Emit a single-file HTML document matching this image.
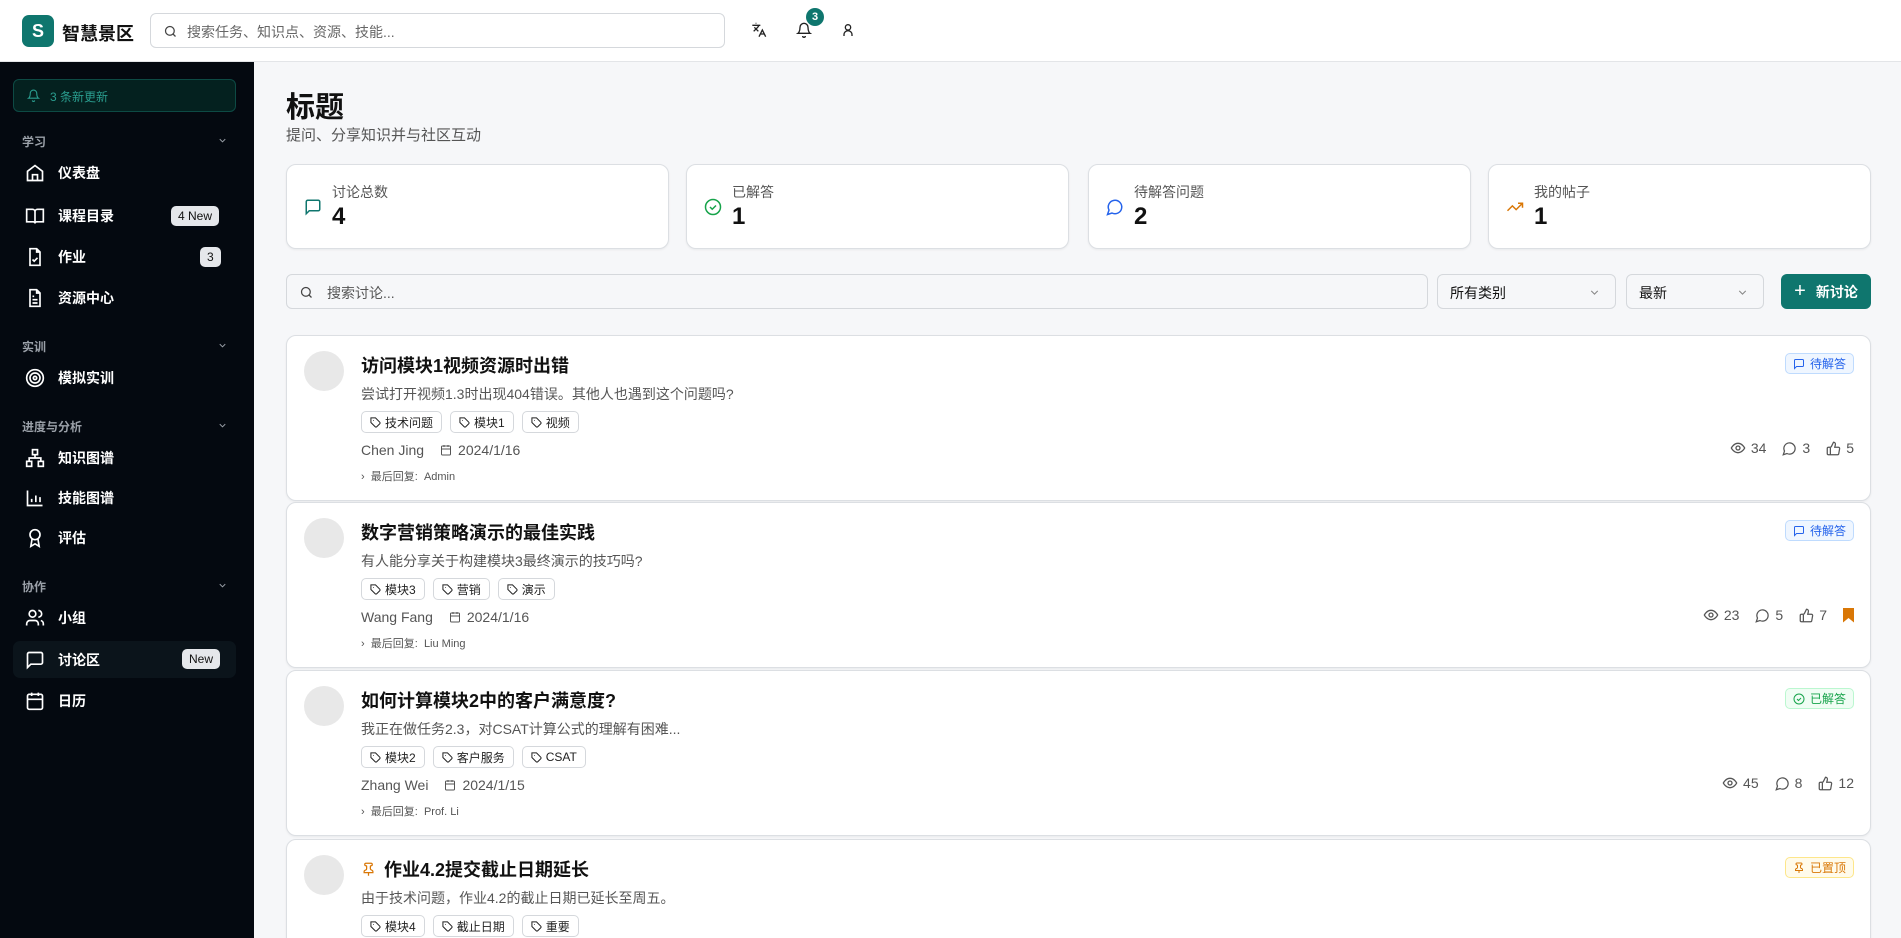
<!DOCTYPE html>
<html><head><meta charset="utf-8"><style>
*{box-sizing:border-box;margin:0;padding:0}
html,body{width:1901px;height:938px;overflow:hidden}
body{background:#f6f7f9;font-family:"Liberation Sans","Noto Sans CJK SC",sans-serif;color:#111;position:relative}
.a{position:absolute}
svg{display:block}
.hdr{left:0;top:0;width:1901px;height:62px;background:#fff;border-bottom:1px solid #e3e5e8}
.side{left:0;top:62px;width:254px;height:876px;background:#040910}
.sec{left:22px;font-size:12px;color:#9aa0a8;font-weight:bold}
.chev{left:217px}
.it{left:25px;display:flex;align-items:center;color:#fff;font-size:14px;font-weight:bold;height:24px}
.it svg{margin-right:13px}
.nb{position:absolute;background:#e5e7eb;color:#111;font-size:12px;border-radius:5px;padding:3px 7px;font-weight:normal}
.card{background:#fff;border:1px solid #dcdfe3;border-radius:10px;box-shadow:0 1px 2px rgba(0,0,0,.06)}
.stat .lbl{position:absolute;left:45px;top:17px;font-size:14px;color:#555}
.stat .num{position:absolute;left:45px;top:38px;font-size:24px;font-weight:bold}
.stat svg{position:absolute;left:17px;top:33px}
.inp{background:#f6f7f9;border:1px solid #d5d8dc;border-radius:6px}
.post{left:286px;width:1585px;height:166px}
.av{position:absolute;left:17px;top:15px;width:40px;height:40px;border-radius:50%;background:#e8e8e8}
.tt{position:absolute;left:74px;top:16px;font-size:18px;font-weight:bold}
.ds{position:absolute;left:74px;top:48px;font-size:14px;color:#555}
.tags{position:absolute;left:74px;top:75px;display:flex;gap:8px}
.tag{border:1px solid #d5d8dc;border-radius:5px;height:22px;padding:0 8px;font-size:12px;display:flex;align-items:center;gap:4px;color:#222}
.au{position:absolute;left:74px;top:106px;font-size:14px;color:#555;display:flex;align-items:center}
.lr{position:absolute;left:74px;top:132px;font-size:11px;color:#555;display:flex;align-items:center;gap:6px}
.bd{position:absolute;right:16px;top:17px;height:21px;padding:0 7px;border-radius:5px;font-size:12px;display:flex;align-items:center;gap:5px}
.st{position:absolute;right:16px;top:104px;display:flex;gap:16px;font-size:14px;color:#555;align-items:center}
.st span{display:flex;align-items:center;gap:5px}
</style></head><body>
<svg width="0" height="0" style="position:absolute"><defs>
<symbol id="tg" viewBox="0 0 24 24"><path d="M12 2H2v10l9.3 9.3a2.4 2.4 0 003.4 0l6.6-6.6a2.4 2.4 0 000-3.4z" fill="none" stroke="#222" stroke-width="2.2"/><circle cx="7.5" cy="7.5" r="1" fill="#222"/></symbol>
<symbol id="eye" viewBox="0 0 24 24"><path d="M2 12s3.5-7 10-7 10 7 10 7-3.5 7-10 7S2 12 2 12z" fill="none" stroke="#555" stroke-width="2"/><circle cx="12" cy="12" r="3" fill="none" stroke="#555" stroke-width="2"/></symbol>
<symbol id="msg" viewBox="0 0 24 24"><path d="M7.9 20A9 9 0 104 16.1L2 22z" fill="none" stroke="#555" stroke-width="2"/></symbol>
<symbol id="thumb" viewBox="0 0 24 24"><path d="M7 10v12M15 5.9L14 10h5.8a2 2 0 012 2.3l-1.4 8a2 2 0 01-2 1.7H4a2 2 0 01-2-2v-8a2 2 0 012-2h2.8a2 2 0 001.8-1.1L12 2a3 3 0 013 3.9z" fill="none" stroke="#555" stroke-width="2"/></symbol>
<symbol id="cal" viewBox="0 0 24 24"><rect x="3" y="4" width="18" height="18" rx="2" fill="none" stroke="#555" stroke-width="2"/><path d="M16 2v4M8 2v4M3 10h18" stroke="#555" stroke-width="2"/></symbol>
<symbol id="chv" viewBox="0 0 24 24"><path d="M6 9l6 6 6-6" fill="none" stroke="#9aa0a8" stroke-width="2"/></symbol>
</defs></svg>
<div class="a hdr">
 <div class="a" style="left:22px;top:15px;width:32px;height:32px;background:#0f766e;border-radius:7px;color:#fff;font-weight:bold;font-size:18px;text-align:center;line-height:32px">S</div>
 <div class="a" style="left:62px;top:20px;font-size:18px;font-weight:bold">智慧景区</div>
 <div class="a" style="left:150px;top:13px;width:575px;height:35px;border:1px solid #d5d8dc;border-radius:6px">
  <svg class="a" style="left:12px;top:10px" width="15" height="15" viewBox="0 0 24 24" fill="none" stroke="#444" stroke-width="2"><circle cx="11" cy="11" r="7"/><path d="M20 20l-4-4"/></svg>
  <div class="a" style="left:36px;top:8px;font-size:14px;color:#666">搜索任务、知识点、资源、技能...</div>
 </div>
 <svg class="a" style="left:751px;top:22px" width="16" height="16" viewBox="0 0 24 24" fill="none" stroke="#222" stroke-width="2"><path d="M5 8l6 6M4 14l6-6 2-3M2 5h12M7 2h1M22 22l-5-10-5 10M14 18h6"/></svg>
 <svg class="a" style="left:796px;top:22px" width="16" height="16" viewBox="0 0 24 24" fill="none" stroke="#222" stroke-width="2"><path d="M6 8a6 6 0 0112 0c0 7 3 9 3 9H3s3-2 3-9M10 21a2 2 0 004 0"/></svg>
 <div class="a" style="left:806px;top:8px;width:18px;height:18px;border-radius:50%;background:#0f766e;color:#fff;font-size:11px;font-weight:bold;text-align:center;line-height:18px">3</div>
 <svg class="a" style="left:840px;top:22px" width="16" height="16" viewBox="0 0 24 24" fill="none" stroke="#222" stroke-width="2"><circle cx="12" cy="8" r="4"/><path d="M6 21v-2a6 6 0 0112 0v2"/></svg>
</div>
<div class="a side">
 <div class="a" style="left:13px;top:17px;width:223px;height:33px;border:1px solid #0d4a44;background:#04211f;border-radius:6px">
  <svg class="a" style="left:13px;top:9px" width="13" height="13" viewBox="0 0 24 24" fill="none" stroke="#2a9d8f" stroke-width="2"><path d="M6 8a6 6 0 0112 0c0 7 3 9 3 9H3s3-2 3-9M10 21a2 2 0 004 0"/></svg>
  <div class="a" style="left:36px;top:8px;font-size:12px;color:#2a9d8f">3 条新更新</div>
 </div>
</div>
<div class="a sec" style="top:133px">学习</div><svg class="a chev" style="top:135px" width="11" height="11"><use href="#chv"/></svg>
<div class="a it" style="top:161px"><svg width="20" height="20" viewBox="0 0 24 24" fill="none" stroke="#fff" stroke-width="2"><path d="M3 10l9-7 9 7v11H3z M9 21v-7h6v7"/></svg>仪表盘</div>
<div class="a it" style="top:204px"><svg width="20" height="20" viewBox="0 0 24 24" fill="none" stroke="#fff" stroke-width="2"><path d="M2 4h7a3 3 0 013 3v14a2 2 0 00-2-2H2zM22 4h-7a3 3 0 00-3 3v14a2 2 0 012-2h8z"/></svg>课程目录</div>
<div class="nb" style="left:171px;top:206px">4 New</div>
<div class="a it" style="top:245px"><svg width="20" height="20" viewBox="0 0 24 24" fill="none" stroke="#fff" stroke-width="2"><path d="M14 2H6v20h12V6zM14 2v4h4M9 15l2 2 4-4"/></svg>作业</div>
<div class="nb" style="left:200px;top:247px">3</div>
<div class="a it" style="top:286px"><svg width="20" height="20" viewBox="0 0 24 24" fill="none" stroke="#fff" stroke-width="2"><path d="M14 2H6v20h12V6zM14 2v4h4M9 10h2M9 14h6M9 18h6"/></svg>资源中心</div>
<div class="a sec" style="top:338px">实训</div><svg class="a chev" style="top:340px" width="11" height="11"><use href="#chv"/></svg>
<div class="a it" style="top:366px"><svg width="20" height="20" viewBox="0 0 24 24" fill="none" stroke="#fff" stroke-width="2"><circle cx="12" cy="12" r="10"/><circle cx="12" cy="12" r="6"/><circle cx="12" cy="12" r="2"/></svg>模拟实训</div>
<div class="a sec" style="top:418px">进度与分析</div><svg class="a chev" style="top:420px" width="11" height="11"><use href="#chv"/></svg>
<div class="a it" style="top:446px"><svg width="20" height="20" viewBox="0 0 24 24" fill="none" stroke="#fff" stroke-width="2"><rect x="9" y="2" width="6" height="6"/><rect x="2" y="16" width="6" height="6"/><rect x="16" y="16" width="6" height="6"/><path d="M12 8v4M5 16v-4h14v4"/></svg>知识图谱</div>
<div class="a it" style="top:486px"><svg width="20" height="20" viewBox="0 0 24 24" fill="none" stroke="#fff" stroke-width="2"><path d="M3 3v18h18M8 17v-4M13 17V9M18 17v-6"/></svg>技能图谱</div>
<div class="a it" style="top:526px"><svg width="20" height="20" viewBox="0 0 24 24" fill="none" stroke="#fff" stroke-width="2"><circle cx="12" cy="8" r="6"/><path d="M8.5 13L7 22l5-3 5 3-1.5-9"/></svg>评估</div>
<div class="a sec" style="top:578px">协作</div><svg class="a chev" style="top:580px" width="11" height="11"><use href="#chv"/></svg>
<div class="a it" style="top:606px"><svg width="20" height="20" viewBox="0 0 24 24" fill="none" stroke="#fff" stroke-width="2"><circle cx="9" cy="7" r="4"/><path d="M2 21v-2a4 4 0 014-4h6a4 4 0 014 4v2M16 3a4 4 0 010 8M22 21v-2a4 4 0 00-3-4"/></svg>小组</div>
<div class="a" style="left:13px;top:641px;width:223px;height:37px;background:#0b141b;border-radius:7px"></div>
<div class="a it" style="top:648px"><svg width="20" height="20" viewBox="0 0 24 24" fill="none" stroke="#fff" stroke-width="2"><path d="M21 15a2 2 0 01-2 2H7l-4 4V5a2 2 0 012-2h14a2 2 0 012 2z"/></svg>讨论区</div>
<div class="nb" style="left:182px;top:649px">New</div>
<div class="a it" style="top:689px"><svg width="20" height="20" viewBox="0 0 24 24" fill="none" stroke="#fff" stroke-width="2"><rect x="3" y="4" width="18" height="18" rx="2"/><path d="M16 2v4M8 2v4M3 10h18"/></svg>日历</div>

<div class="a" style="left:286px;top:84px;font-size:29px;font-weight:bold">标题</div>
<div class="a" style="left:286px;top:124px;font-size:15px;color:#555">提问、分享知识并与社区互动</div>

<div class="a card stat" style="left:286px;top:164px;width:383px;height:85px"><svg width="18" height="18" viewBox="0 0 24 24" fill="none" stroke="#0f766e" stroke-width="2"><path d="M21 15a2 2 0 01-2 2H7l-4 4V5a2 2 0 012-2h14a2 2 0 012 2z"/></svg><div class="lbl">讨论总数</div><div class="num">4</div></div>
<div class="a card stat" style="left:686px;top:164px;width:383px;height:85px"><svg width="18" height="18" viewBox="0 0 24 24" fill="none" stroke="#16a34a" stroke-width="2"><circle cx="12" cy="12" r="10"/><path d="M8 12l3 3 5-5"/></svg><div class="lbl">已解答</div><div class="num">1</div></div>
<div class="a card stat" style="left:1088px;top:164px;width:383px;height:85px"><svg width="18" height="18" viewBox="0 0 24 24" fill="none" stroke="#2563eb" stroke-width="2"><path d="M7.9 20A9 9 0 104 16.1L2 22z"/></svg><div class="lbl">待解答问题</div><div class="num">2</div></div>
<div class="a card stat" style="left:1488px;top:164px;width:383px;height:85px"><svg width="18" height="18" viewBox="0 0 24 24" fill="none" stroke="#d97706" stroke-width="2"><path d="M22 7l-8.5 8.5-5-5L2 17M16 7h6v6"/></svg><div class="lbl">我的帖子</div><div class="num">1</div></div>

<div class="a inp" style="left:286px;top:274px;width:1142px;height:35px">
 <svg class="a" style="left:12px;top:10px" width="15" height="15" viewBox="0 0 24 24" fill="none" stroke="#444" stroke-width="2"><circle cx="11" cy="11" r="7"/><path d="M20 20l-4-4"/></svg>
 <div class="a" style="left:40px;top:8px;font-size:14px;color:#555">搜索讨论...</div></div>
<div class="a inp" style="left:1437px;top:274px;width:179px;height:35px"><div class="a" style="left:12px;top:8px;font-size:14px">所有类别</div><svg class="a" style="right:14px;top:11px" width="13" height="13" viewBox="0 0 24 24"><path d="M6 9l6 6 6-6" fill="none" stroke="#888" stroke-width="2"/></svg></div>
<div class="a inp" style="left:1626px;top:274px;width:138px;height:35px"><div class="a" style="left:12px;top:8px;font-size:14px">最新</div><svg class="a" style="right:14px;top:11px" width="13" height="13" viewBox="0 0 24 24"><path d="M6 9l6 6 6-6" fill="none" stroke="#888" stroke-width="2"/></svg></div>
<div class="a" style="left:1781px;top:274px;width:90px;height:35px;background:#0f766e;border-radius:6px;color:#fff;font-size:14px;font-weight:bold;display:flex;align-items:center;justify-content:center;gap:10px"><span style="font-size:20px;font-weight:normal">+</span>新讨论</div>

<div class="a card post" style="top:335px"><div class="av"></div><div class="tt">访问模块1视频资源时出错</div><div class="ds">尝试打开视频1.3时出现404错误。其他人也遇到这个问题吗?</div>
<div class="tags"><div class="tag"><svg width="11" height="11"><use href="#tg"/></svg>技术问题</div><div class="tag"><svg width="11" height="11"><use href="#tg"/></svg>模块1</div><div class="tag"><svg width="11" height="11"><use href="#tg"/></svg>视频</div></div>
<div class="au">Chen Jing<svg style="margin:0 6px 0 16px" width="12" height="12"><use href="#cal"/></svg>2024/1/16</div><div class="lr">›&nbsp; 最后回复: &nbsp;Admin</div>
<div class="bd" style="background:#eff6ff;border:1px solid #bfdbfe;color:#2563eb"><svg width="12" height="12" viewBox="0 0 24 24" fill="none" stroke="#2563eb" stroke-width="2"><path d="M21 15a2 2 0 01-2 2H7l-4 4V5a2 2 0 012-2h14a2 2 0 012 2z"/></svg>待解答</div>
<div class="st"><span><svg width="16" height="16"><use href="#eye"/></svg>34</span><span><svg width="15" height="15"><use href="#msg"/></svg>3</span><span><svg width="15" height="15"><use href="#thumb"/></svg>5</span></div></div>

<div class="a card post" style="top:502px"><div class="av"></div><div class="tt">数字营销策略演示的最佳实践</div><div class="ds">有人能分享关于构建模块3最终演示的技巧吗?</div>
<div class="tags"><div class="tag"><svg width="11" height="11"><use href="#tg"/></svg>模块3</div><div class="tag"><svg width="11" height="11"><use href="#tg"/></svg>营销</div><div class="tag"><svg width="11" height="11"><use href="#tg"/></svg>演示</div></div>
<div class="au">Wang Fang<svg style="margin:0 6px 0 16px" width="12" height="12"><use href="#cal"/></svg>2024/1/16</div><div class="lr">›&nbsp; 最后回复: &nbsp;Liu Ming</div>
<div class="bd" style="background:#eff6ff;border:1px solid #bfdbfe;color:#2563eb"><svg width="12" height="12" viewBox="0 0 24 24" fill="none" stroke="#2563eb" stroke-width="2"><path d="M21 15a2 2 0 01-2 2H7l-4 4V5a2 2 0 012-2h14a2 2 0 012 2z"/></svg>待解答</div>
<div class="st"><span><svg width="16" height="16"><use href="#eye"/></svg>23</span><span><svg width="15" height="15"><use href="#msg"/></svg>5</span><span><svg width="15" height="15"><use href="#thumb"/></svg>7</span><span style="width:11px;height:15px;background:#d97706;clip-path:polygon(0 0,100% 0,100% 100%,50% 70%,0 100%)"></span></div></div>

<div class="a card post" style="top:670px"><div class="av"></div><div class="tt">如何计算模块2中的客户满意度?</div><div class="ds">我正在做任务2.3，对CSAT计算公式的理解有困难...</div>
<div class="tags"><div class="tag"><svg width="11" height="11"><use href="#tg"/></svg>模块2</div><div class="tag"><svg width="11" height="11"><use href="#tg"/></svg>客户服务</div><div class="tag"><svg width="11" height="11"><use href="#tg"/></svg>CSAT</div></div>
<div class="au">Zhang Wei<svg style="margin:0 6px 0 16px" width="12" height="12"><use href="#cal"/></svg>2024/1/15</div><div class="lr">›&nbsp; 最后回复: &nbsp;Prof. Li</div>
<div class="bd" style="background:#f0fdf4;border:1px solid #bbf7d0;color:#16a34a"><svg width="12" height="12" viewBox="0 0 24 24" fill="none" stroke="#16a34a" stroke-width="2"><circle cx="12" cy="12" r="10"/><path d="M8 12l3 3 5-5"/></svg>已解答</div>
<div class="st"><span><svg width="16" height="16"><use href="#eye"/></svg>45</span><span><svg width="15" height="15"><use href="#msg"/></svg>8</span><span><svg width="15" height="15"><use href="#thumb"/></svg>12</span></div></div>

<div class="a card post" style="top:839px;height:110px"><div class="av"></div><div class="tt" style="display:flex;align-items:center;gap:8px"><svg width="15" height="15" viewBox="0 0 24 24" fill="none" stroke="#d97706" stroke-width="2"><path d="M12 17v5M9 10.8a2 2 0 01-1.1 1.8l-1.8.9A2 2 0 005 15.2V17h14v-1.8a2 2 0 00-1.1-1.8l-1.8-.9a2 2 0 01-1.1-1.8V7a1 1 0 011-1 2 2 0 000-4H8a2 2 0 000 4 1 1 0 011 1z"/></svg>作业4.2提交截止日期延长</div><div class="ds">由于技术问题，作业4.2的截止日期已延长至周五。</div>
<div class="tags"><div class="tag"><svg width="11" height="11"><use href="#tg"/></svg>模块4</div><div class="tag"><svg width="11" height="11"><use href="#tg"/></svg>截止日期</div><div class="tag"><svg width="11" height="11"><use href="#tg"/></svg>重要</div></div>
<div class="bd" style="background:#fffbeb;border:1px solid #fde68a;color:#d97706"><svg width="12" height="12" viewBox="0 0 24 24" fill="none" stroke="#d97706" stroke-width="2"><path d="M12 17v5M9 10.8a2 2 0 01-1.1 1.8l-1.8.9A2 2 0 005 15.2V17h14v-1.8a2 2 0 00-1.1-1.8l-1.8-.9a2 2 0 01-1.1-1.8V7a1 1 0 011-1 2 2 0 000-4H8a2 2 0 000 4 1 1 0 011 1z"/></svg>已置顶</div></div>
</body></html>
